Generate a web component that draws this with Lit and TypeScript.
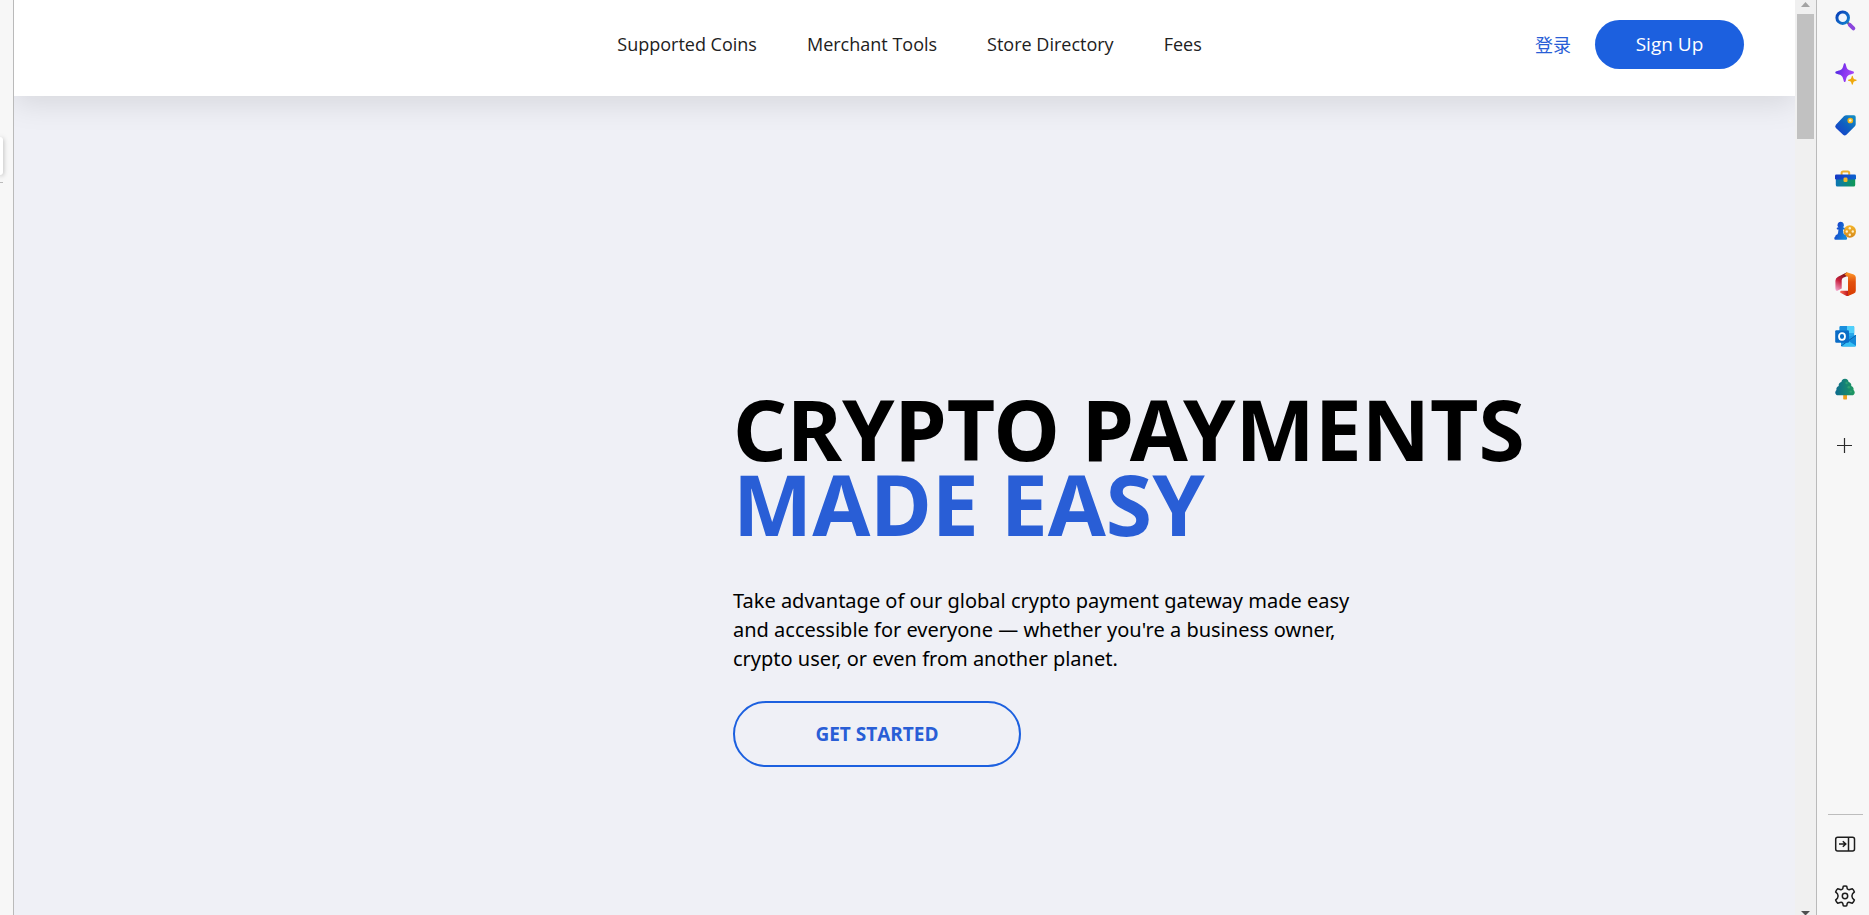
import { LitElement, html, css, svg, TemplateResult } from "lit";
import { customElement } from "lit/decorators.js";

interface RailItem {
  label: string;
  art: TemplateResult;
}

const searchIcon = svg`
  <defs>
    <linearGradient id="g" x1="0" y1="0" x2="1" y2="1"><stop offset="0" stop-color="#0a3fb8"/><stop offset="1" stop-color="#1180cf"/></linearGradient>
  </defs>
  <path d="M13.400 13.400l2.400 2.400" stroke="#6b6f7c" stroke-width="2.400"/>
  <path d="M15.800 15.800l3.600 3.600" stroke="#8b46dd" stroke-width="3.800" stroke-linecap="round"/>
  <circle cx="8.700" cy="8.700" r="5.800" fill="#eef5fd" stroke="url(#g)" stroke-width="3"/>`;

const sparkleIcon = svg`
  <defs>
    <linearGradient id="g" x1="0" y1="0.3" x2="1" y2="0.6"><stop offset="0" stop-color="#4a2be0"/><stop offset="0.5" stop-color="#8a35f0"/><stop offset="1" stop-color="#a94bf8"/></linearGradient>
  </defs>
  <path d="M10.700 1.200c.7 0 .9.600 1.200 1.800.9 4 2 5 6 6 1.400.4 2.100.6 2.100 1.400s-.7 1.100-2.100 1.500c-4 1-5.100 2-6 6-.3 1.500-.5 2.100-1.200 2.100s-.9-.6-1.200-2.100c-.9-4-2-5-6-6-1.400-.4-2.200-.7-2.200-1.500s.8-1 2.200-1.400c4-1 5.100-2 6-6 .3-1.200.5-1.800 1.200-1.800z" fill="url(#g)"/>
  <path d="M18.300 13.800c.4 0 .5.400.7 1.100.4 1.700.9 2.200 2.500 2.600.8.200 1.200.4 1.200.8s-.4.600-1.200.8c-1.600.4-2.100.9-2.500 2.600-.2.700-.3 1.100-.7 1.100s-.5-.4-.7-1.100c-.4-1.700-.9-2.200-2.500-2.600-.8-.2-1.200-.4-1.200-.8s.4-.6 1.200-.8c1.600-.4 2.100-.9 2.500-2.600.2-.7.3-1.100.7-1.100z" fill="#efa90c"/>`;

const tagIcon = svg`
  <defs>
    <linearGradient id="g" x1="0" y1="1" x2="1" y2="0"><stop offset="0.1" stop-color="#1740cc"/><stop offset="0.5" stop-color="#0f5fc0"/><stop offset="1" stop-color="#1492c4"/></linearGradient>
  </defs>
  <path d="M12.500 1.200h7.500q1.700 0 1.700 1.700v7.300q0 1.200-.8 2l-8.500 8.500q-1.700 1.400-3.300 0l-7.200-6.700q-1.500-1.500 0-3.200l8-8.600q1-1 2.600-1z" fill="url(#g)"/>
  <circle cx="16.300" cy="6.500" r="2.100" fill="#fff3c9" stroke="#f2b619" stroke-width="1.500"/>`;

const toolboxIcon = svg`
  <defs>
    <linearGradient id="g" x1="0" y1="0" x2="1" y2="0"><stop offset="0" stop-color="#0b74b5"/><stop offset="1" stop-color="#0f9a55"/></linearGradient>
    <linearGradient id="h" x1="0" y1="0" x2="1" y2="0"><stop offset="0" stop-color="#1638c4"/><stop offset="1" stop-color="#0d63cf"/></linearGradient>
  </defs>
  <path d="M7.600 8v-2q0-1.500 1.500-1.500h4.600q1.500 0 1.500 1.500v2" fill="none" stroke="#eeb02c" stroke-width="2"/>
  <path d="M1.800 11.500h19.400v6.500q0 1.500-1.500 1.500h-16.400q-1.500 0-1.500-1.500z" fill="url(#g)"/>
  <rect x="1" y="7.500" width="21" height="5" rx="1.300" fill="url(#h)"/>
  <rect x="9.500" y="10.500" width="4" height="4.600" rx="1.300" fill="#f5b82a"/>`;

const gamesIcon = svg`
  <defs>
    <linearGradient id="g" x1="0" y1="0" x2="1" y2="0.5"><stop offset="0" stop-color="#1730c8"/><stop offset="1" stop-color="#1486d8"/></linearGradient>
    <linearGradient id="h" x1="0" y1="0" x2="0" y2="1"><stop offset="0" stop-color="#f4b52a"/><stop offset="1" stop-color="#d68a1c"/></linearGradient>
  </defs>
  <circle cx="15.800" cy="11.500" r="6.200" fill="url(#h)"/>
  <g fill="#fff0c8"><circle cx="15.800" cy="8.300" r="1.200"/><circle cx="12.800" cy="11.500" r="1.200"/><circle cx="18.800" cy="11.500" r="1.200"/><circle cx="15.800" cy="14.700" r="1.200"/></g>
  <path d="M6.700 1.800a3.300 3.300 0 0 1 2.300 5.600h.8q.9 0 .9 1t-.9 1h-.9q.2 3.600 1.200 5.200h.4q1.600.3 1.600 2 1 .5 1 1.800 0 1.400-1.200 1.400h-10.400q-1.200 0-1.200-1.400 0-1.300 1-1.800 0-1.700 1.600-2h.4q1-1.600 1.200-5.200h-.9q-.9 0-.9-1t.9-1h.8a3.300 3.300 0 0 1 2.300-5.600z" fill="url(#g)"/>`;

const officeIcon = svg`
  <defs>
    <linearGradient id="g" x1="0.600" y1="0" x2="0.200" y2="1"><stop offset="0" stop-color="#7c1516"/><stop offset="0.500" stop-color="#c9213f"/><stop offset="1" stop-color="#f0a0c8"/></linearGradient>
    <linearGradient id="h" x1="0" y1="0" x2="0" y2="1"><stop offset="0" stop-color="#ff9c2a"/><stop offset="0.400" stop-color="#e2510e"/><stop offset="1" stop-color="#d83b01"/></linearGradient>
    <linearGradient id="i" x1="0" y1="0" x2="1" y2="0"><stop offset="0" stop-color="#ff6a55"/><stop offset="1" stop-color="#b8141a"/></linearGradient>
  </defs>
  <path d="M13-.7l-9 4.400q-2.600 1.300-2.600 4v7.800q0 2 1.600 2.500l4.700-2.500v-8.300q0-1.800 1.500-2.500l4.800-2z" fill="url(#g)"/>
  <path d="M7 17.800h7.500v5.200q-1 .4-2 0l-6-3.200q-1-1.200.5-2z" fill="url(#i)"/>
  <path d="M12.800-.7l7 2.300q2 .8 2 2.900v13.200q0 2.200-2 2.900l-6.300 2.600q.5-.5.500-1.600v-17.600l-3.500-2.500z" fill="url(#h)"/>`;

const outlookIcon = svg`
  <rect x="5.600" y="1" width="14.600" height="13" rx="1" fill="#28a8ea"/>
  <path d="M5.600 5h7.400v-4h6.200q1 0 1 1v6h-14.600z" fill="#50d0fb"/>
  <path d="M5.600 5.500v-3.500q0-1 1-1h6.400v4.500z" fill="#1a8fdd"/>
  <path d="M7 13l15-3v10.300q0 1.200-1.200 1.200h-12.600q-1.200 0-1.200-1.200z" fill="#1a9ae4"/>
  <path d="M22 10.300v10.700l-9-5.200z" fill="#1489d8"/>
  <path d="M7 21l15-10.700" stroke="#0a5aa4" stroke-width=".8"/>
  <path d="M8 21.500l6.500-5.500 7.500 4.700q-.3.800-1.200.8z" fill="#36c0f4"/>
  <rect x="1.200" y="5.200" width="13.800" height="12.600" rx="1.200" fill="#0a6cc6"/>
  <ellipse cx="8" cy="11.500" rx="3" ry="3.300" fill="none" stroke="#fff" stroke-width="1.800"/>`;

const treeIcon = svg`
  <defs>
    <linearGradient id="g" x1="0" y1="0.300" x2="1" y2="0.300"><stop offset="0" stop-color="#0c6a8e"/><stop offset="1" stop-color="#1f9a5e"/></linearGradient>
  </defs>
  <rect x="9.200" y="15" width="3.800" height="6.600" rx="1.200" fill="#f0a01e"/>
  <path d="M11 .8c2.300 0 3.400 1.500 3.600 3.200 2 .4 3 2 2.700 3.900 2 .7 2.700 2.300 2.200 4 2.200 1.900 1.400 5.300-1.500 5.300h-14c-2.900 0-3.700-3.400-1.500-5.300-.5-1.700.200-3.300 2.200-4-.3-1.900.7-3.500 2.700-3.900.2-1.700 1.300-3.200 3.600-3.200z" fill="url(#g)"/>
  <g fill="#3fae74" opacity=".6"><circle cx="12.600" cy="5" r="1.200"/><circle cx="14.800" cy="9.300" r="1.300"/><circle cx="16.800" cy="13.600" r="1.200"/></g>`;

const plusIcon = svg`<path d="M10.500 3v15M3 10.500h15" stroke="#2b2b2b" stroke-width="1.200" fill="none"/>`;

const panelIcon = svg`
  <g fill="none" stroke="#1c1c1c" stroke-width="1.500">
    <rect x="1.700" y="4.200" width="18.800" height="13.800" rx="2"/>
    <path d="M14.500 4v14M5 11h6.500M8.800 8.200l3 2.800-3 2.800"/>
  </g>`;

const gearIcon = svg`
  <g fill="none" stroke="#1c1c1c" stroke-width="1.500" stroke-linejoin="round">
    <path d="M9.300 1.200Q11 .8 12.700 1.200L13.300 3.800Q14.200 5 15.800 4.500L18.300 3.700Q19.700 5 20.400 6.900L18.600 8.700Q17.200 11 18.600 13.300L20.400 15.100Q19.700 17 18.300 18.300L15.800 17.500Q14.200 17 13.300 18.200L12.700 20.800Q11 21.200 9.300 20.800L8.700 18.200Q7.800 17 6.200 17.500L3.700 18.300Q2.300 17 1.600 15.100L3.400 13.300Q4.800 11 3.400 8.700L1.600 6.900Q2.300 5 3.700 3.700L6.200 4.500Q7.800 5 8.700 3.800Z"/>
    <circle cx="11" cy="11" r="2.700"/>
  </g>`;

/** A square icon button; each has its own shadow root, so gradient ids stay local. */
@customElement("rail-button")
class RailButton extends LitElement {
  static properties = { label: {}, art: { attribute: false } };
  declare label: string;
  declare art: TemplateResult;

  static styles = css`
    :host { display: block; }
    .button {
      display: flex;
      align-items: center;
      justify-content: center;
      width: 32px;
      height: 32px;
      padding: 0;
      border: 0;
      background: none;
      cursor: pointer;
    }
    .icon { display: block; width: 24px; height: 24px; }
  `;

  render() {
    return html`<button class="button" type="button" aria-label=${this.label}>
      <svg class="icon" viewBox="-1 -1 24 24" aria-hidden="true">${this.art}</svg>
    </button>`;
  }
}

@customElement("side-rail")
class SideRail extends LitElement {
  static styles = css`
    :host {
      display: flex;
      flex-direction: column;
      align-items: center;
      box-sizing: border-box;
      width: 53px;
      padding: 4px 0 3px;
      border-left: 1px solid #bababa;
      background: #f7f7f7;
    }
    .apps {
      display: flex;
      flex-direction: column;
      justify-content: space-between;
      height: 401px;
      margin-left: 4px;
    }
    .add { margin: 25px 0 auto 4px; }
    .tools {
      display: flex;
      flex-direction: column;
      align-items: center;
      gap: 20px;
      width: 35px;
      padding-top: 13px;
      margin-left: 4px;
      border-top: 1px solid #bdbdbd;
      box-sizing: border-box;
    }
  `;

  private apps: RailItem[] = [
    { label: "Search", art: searchIcon },
    { label: "Discover", art: sparkleIcon },
    { label: "Shopping", art: tagIcon },
    { label: "Tools", art: toolboxIcon },
    { label: "Games", art: gamesIcon },
    { label: "Office", art: officeIcon },
    { label: "Outlook", art: outlookIcon },
    { label: "Tree", art: treeIcon },
  ];

  render() {
    return html`
      <div class="apps">
        ${this.apps.map((a) => html`<rail-button .label=${a.label} .art=${a.art}></rail-button>`)}
      </div>
      <rail-button class="add" .label=${"Customize"} .art=${plusIcon}></rail-button>
      <div class="tools">
        <rail-button .label=${"Hide sidebar"} .art=${panelIcon}></rail-button>
        <rail-button .label=${"Settings"} .art=${gearIcon}></rail-button>
      </div>
    `;
  }
}

@customElement("app-root")
class AppRoot extends LitElement {
  static styles = css`
    :host {
      display: flex;
      height: 100vh;
      overflow: hidden;
      background: #f7f7f7;
      color: #000;
      font-family: "Open Sans", "Noto Sans", "Noto Sans CJK SC", sans-serif;
    }
    .edge {
      flex: none;
      box-sizing: border-box;
      width: 14px;
      padding-top: 137px;
      border-right: 1px solid #bababa;
    }
    .handle {
      width: 3px;
      height: 38px;
      border-radius: 0 4px 4px 0;
      background: #fff;
      box-shadow: 0 1px 5px rgba(0, 0, 0, 0.35);
    }
    .tick { width: 3px; height: 1px; margin-top: 7px; background: #bbb; }
    .page {
      flex: 1;
      min-width: 0;
      overflow: hidden;
      background: #eff0f6;
    }
    .header {
      display: grid;
      grid-template-columns: 1fr auto 1fr;
      align-items: center;
      padding: 20px 51px 27px 61px;
      background: #fff;
      box-shadow: 0 8px 28px rgba(0, 0, 0, 0.1);
    }
    .nav {
      grid-column: 2;
      display: flex;
      gap: 50px;
      padding-bottom: 2px;
      font-size: 18px;
      line-height: 24px;
    }
    .nav-link { color: #212121; text-decoration: none; white-space: nowrap; }
    .account {
      display: flex;
      align-items: center;
      justify-content: flex-end;
      gap: 24px;
    }
    .login {
      padding-bottom: 2px;
      color: #295ed6;
      font-family: "Noto Sans CJK SC", sans-serif;
      font-size: 18px;
      line-height: 24px;
      text-decoration: none;
    }
    .signup {
      width: 149px;
      height: 49px;
      padding: 0 0 2px;
      border: 0;
      border-radius: 25px;
      background: #1c60df;
      color: #fff;
      font: 400 19px "Open Sans", sans-serif;
      cursor: pointer;
    }
    .hero { padding: 295px 51px 0 40.37%; }
    .title {
      margin: 0;
      font-family: "Noto Sans", sans-serif;
      font-size: 84px;
      line-height: 75px;
      font-weight: 700;
      white-space: nowrap;
    }
    .accent { display: block; color: #295ed6; }
    .lead {
      margin: 45px 0 0;
      font-family: "Noto Sans", sans-serif;
      font-size: 20px;
      line-height: 29px;
    }
    .start {
      width: 288px;
      height: 66px;
      margin-top: 28px;
      padding: 0;
      border: 2px solid #1c60df;
      border-radius: 33px;
      background: transparent;
      color: #295ed6;
      font: 700 19px "Open Sans", sans-serif;
      cursor: pointer;
    }
    .scroll {
      flex: none;
      display: flex;
      flex-direction: column;
      align-items: center;
      width: 21px;
      background: #f0f0f0;
    }
    .arrow { display: block; width: 9px; height: 5px; }
    .up { margin: 2px 0 7px; fill: #a3a3a3; }
    .down { margin-top: auto; height: 4px; fill: #505050; }
    .thumb { width: 17px; height: 125px; background: #c1c1c1; }
  `;

  private links = ["Supported Coins", "Merchant Tools", "Store Directory", "Fees"];

  render() {
    return html`
      <div class="edge"><div class="handle"></div><div class="tick"></div></div>
      <main class="page">
        <header class="header">
          <nav class="nav">
            ${this.links.map((l) => html`<a class="nav-link" href="#">${l}</a>`)}
          </nav>
          <div class="account">
            <a class="login" href="#">登录</a>
            <button class="signup" type="button">Sign Up</button>
          </div>
        </header>
        <section class="hero">
          <h1 class="title">CRYPTO PAYMENTS <span class="accent">MADE EASY</span></h1>
          <p class="lead">
            Take advantage of our global crypto payment gateway made easy<br />
            and accessible for everyone — whether you're a business owner,<br />
            crypto user, or even from another planet.
          </p>
          <button class="start" type="button">GET STARTED</button>
        </section>
      </main>
      <div class="scroll" aria-hidden="true">
        <svg class="arrow up" viewBox="0 0 9 5"><path d="M0 5L4.500 0 9 5z" /></svg>
        <div class="thumb"></div>
        <svg class="arrow down" viewBox="0 0 9 4"><path d="M0 0h9L5 4H4z" /></svg>
      </div>
      <side-rail></side-rail>
    `;
  }
}
